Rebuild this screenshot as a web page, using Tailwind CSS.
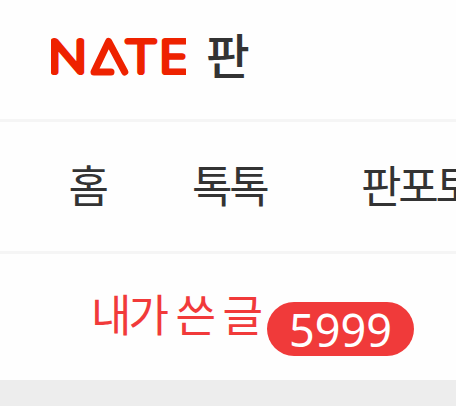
<!DOCTYPE html>
<html lang="ko">
<head>
<meta charset="utf-8">
<title>NATE 판</title>
<script src="https://cdn.jsdelivr.net/npm/@tailwindcss/browser@4"></script>
</head>
<body class="w-[456px] h-[406px] overflow-hidden bg-[#fefefe] font-['Noto_Sans_CJK_KR',sans-serif] text-[#333]">
<header class="flex h-[122px] items-start border-b-3 border-[#f5f5f5] pl-[51px] pt-[32px]">
  <svg class="h-[50px] w-[135px] shrink-0" viewBox="51 32 135 50" role="img" aria-label="NATE">
    <g fill="#ee2200" stroke="#ee2200" stroke-width="6.2" stroke-linejoin="round" stroke-linecap="round" font-family="Lato" font-weight="100" font-size="43.5">
      <text x="48.4" y="72.2" textLength="38" lengthAdjust="spacingAndGlyphs">N</text>
      <polyline points="111,72 94,72 108.6,41.5 124.8,72" fill="none" stroke-width="7"/>
      <text x="127.2" y="72.2" textLength="27.4" lengthAdjust="spacingAndGlyphs">T</text>
      <text x="159.7" y="72.2" textLength="28" lengthAdjust="spacingAndGlyphs">E</text>
    </g>
  </svg>
  <span class="-mt-[3px] ml-[20px] text-[47.5px] leading-[50px] font-medium">판</span>
</header>
<nav class="flex h-[132px] items-start border-b-3 border-[#f5f5f5] pt-[32px] text-[44px] leading-[60px] whitespace-nowrap tracking-[-3.2px]">
  <span class="ml-[68.5px] w-[123.5px] shrink-0">홈</span>
  <span class="w-[169px] shrink-0">톡톡</span>
  <span class="shrink-0">판포토</span>
</nav>
<section class="flex h-[126px] items-start pl-[91px] pt-[29px] whitespace-nowrap">
  <span class="w-[176px] shrink-0 text-[44px] leading-[60px] tracking-[-3px] [word-spacing:0.2px] text-[#f13a3a]">내가 쓴 글</span>
  <span class="mt-[19px] h-[54px] w-[147px] shrink-0 rounded-full bg-[#f03a3a] text-center font-['Noto_Sans'] text-[45px] leading-[56px] text-white">5999</span>
</section>
<div class="h-[26px] bg-[#ededed]"></div>
</body>
</html>
